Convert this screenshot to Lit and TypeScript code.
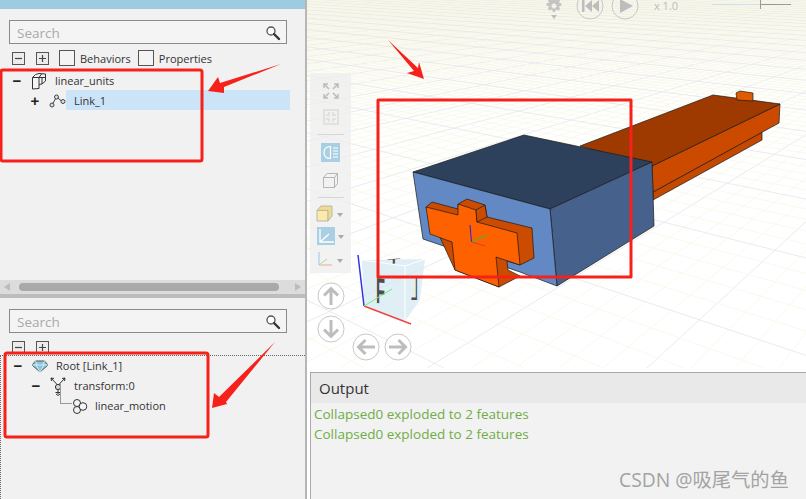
import { LitElement, html, svg, css } from 'lit';
import { customElement } from 'lit/decorators.js';

const searchIcon = html`<svg class="glass" width="16" height="16" viewBox="0 0 16 16">
  <circle cx="6" cy="6" r="4" fill="#fff" stroke="#555" stroke-width="1.3"/>
  <path d="M9 9l5 5" stroke="#333" stroke-width="2.4" stroke-linecap="round"/></svg>`;

const icons: Record<string, unknown> = {
  part: html`<svg width="16" height="18" viewBox="0 0 16 18" fill="#f4f4f4" stroke="#333" stroke-width="1">
    <path d="M1.500 5.500L4.500 2.500L8 1.500L14.500 2L14.500 9L11 12L8 12.500L8 16.500L1.500 17Z"/>
    <path d="M1.500 5.500L8 5.500L8 12.500M8 5.500L10.500 2M11 5.500L11 12M8 5.500L14.500 5.500" fill="none"/></svg>`,
  link: html`<svg width="17" height="14" viewBox="0 0 17 14" fill="#cfe3ee" stroke="#444" stroke-width="1">
    <path d="M3 11L7.500 3L12.500 7" fill="none"/>
    <circle cx="3" cy="11" r="2"/><circle cx="7.500" cy="3" r="2"/><circle cx="14" cy="7.500" r="2"/></svg>`,
  gem: html`<svg width="18" height="13" viewBox="0 0 18 13" fill="#8fc3dc" stroke="#555" stroke-width="1">
    <path d="M4.500 1L13.500 1L17 5L9 12L1 5Z"/>
    <path d="M1 5L17 5M5 5L9 12L13 5M4.500 1L6 5M13.500 1L12 5" fill="none" stroke="#dff" stroke-width=".7"/></svg>`,
  transform: html`<svg width="16" height="19" viewBox="0 0 16 19" fill="none" stroke="#333" stroke-width="1">
    <path d="M1 1L8 8.500L15 1M8 8.500L8 17M5.500 15.500L10.500 15.500"/>
    <path d="M1 1L4 1.500M1 1L1.500 4M15 1L12 1.500M15 1L14.500 4M6 17L8 18.500L10 17"/>
    <circle cx="8" cy="10" r="2.600" fill="#d8d8d8"/></svg>`,
  motion: html`<svg width="16" height="15" viewBox="0 0 16 15" fill="#f4f4f4" stroke="#333" stroke-width="1">
    <circle cx="5" cy="4" r="3.500"/><circle cx="5" cy="11" r="3.500"/><circle cx="11" cy="7.500" r="3.800"/></svg>`,
};

type Row = { depth: number; toggle?: '-' | '+'; icon: string; label: string; selected?: boolean; branch?: boolean };

const upperTree: Row[] = [
  { depth: 0, toggle: '-', icon: 'part', label: 'linear_units' },
  { depth: 1, toggle: '+', icon: 'link', label: 'Link_1', selected: true },
];
const lowerTree: Row[] = [
  { depth: 0, toggle: '-', icon: 'gem', label: 'Root [Link_1]' },
  { depth: 1, toggle: '-', icon: 'transform', label: 'transform:0' },
  { depth: 2, icon: 'motion', label: 'linear_motion', branch: true },
];

const VIEW_X = 307;
const HORIZON = -40;
const BASE_Y = 368;

// ground grid: parallel ground lines cut a screen row at equal steps
function family(vpX: number, from: number, to: number, step: number, major: number) {
  const out: unknown[] = [];
  for (let x = from; x < to; x += step) {
    const isMajor = ((x - major) % (step * 5) + step * 5) % (step * 5) === 0;
    out.push(svg`<line class=${isMajor ? 'major' : 'minor'}
      x1=${vpX - VIEW_X} y1=${HORIZON} x2=${x - VIEW_X} y2=${BASE_Y} />`);
  }
  return out;
}

const scene = svg`
  <g class="grid">
    ${family(1090, 647 - 44 * 175, 1300, 44, 647)}
    ${family(-380, 844 - 80 * 8, 12000, 80, 844)}
  </g>
  <g transform="translate(${-VIEW_X} 0)" stroke="#1a1a1a" stroke-width=".7" stroke-linejoin="round">
    <path d="M653 192L762 132L762 140L653 200Z" fill="#c44800"/>
    <path d="M652 166L780 104L779 123L653 192Z" fill="#cc4a00"/>
    <path d="M580 146L713 95L780 104L652 166Z" fill="#9e3a00"/>
    <path d="M736 93L740 91L753 93L753 101L737 100Z" fill="#e05a00"/>
    <path d="M413 172L524 135L652 162L550 209Z" fill="#2d415d"/>
    <path d="M550 209L652 162L654 226L557 286Z" fill="#46628c"/>
    <path d="M413 172L550 209L557 286L520 272L423 239Z" fill="#6389c4"/>
    <path d="M426 207L432 202L458 209L458 204L467 199L485 205L487 217L532 228L534 258L520 265L507 261L508 270L520 276L499 287L455 270Z" fill="#cb4b00"/>
    <path d="M426 207L458 215L458 204L476 210L477 222L517 233L520 265L496 257L499 287L455 270L452 242L430 234Z" fill="#fe6200"/>
    <path d="M476 210L485 205L487 217L477 222Z" fill="#cb4b00"/>
  </g>
  <g transform="translate(${-VIEW_X} 0)" fill="none" stroke-width="1">
    <path d="M470 225L471.500 242" stroke="#2222ee"/>
    <path d="M471.500 242L487 235" stroke="#22cc22"/>
    <path d="M471.500 242L485 246" stroke="#ee3333"/>
  </g>
`;

const cube = svg`
  <g transform="translate(${-VIEW_X} 0)">
    <path d="M362 260L425 259L420 300L405 321L364 306Z" fill="#cfe6f0" fill-opacity=".65"/>
    <path d="M362 260L405 266L425 259M405 266L405 321" fill="none" stroke="#fff" stroke-width="1"/>
    <text class="face" transform="matrix(1 .12 0 1 376 303) scale(1.050 2.600)">F</text>
    <text class="face thin" transform="matrix(-1 0 0 1 418 300) scale(.9 2.400)">L</text>
    <text class="face thin" transform="matrix(1 -.05 0 1 387 264) scale(1.600 .5)">T</text>
    <line x1="364" y1="306" x2="358" y2="255" stroke="#3333ee" stroke-width="1.500"/>
    <line x1="364" y1="306" x2="411" y2="324" stroke="#ee4444" stroke-width="1.500"/>
    <line x1="364" y1="306" x2="392" y2="289" stroke="#77ee77" stroke-width="1"/>
  </g>
`;

function roundBtn(kind: 'up' | 'down' | 'left' | 'right') {
  const rot = { up: 0, down: 180, left: 270, right: 90 }[kind];
  return html`<svg class="nav" width="28" height="28" viewBox="0 0 28 28">
    <circle cx="14" cy="14" r="13" fill="#fff" fill-opacity=".6" stroke="#c8c8c8" stroke-width="1"/>
    <g transform="rotate(${rot} 14 14)" fill="none" stroke="#bdbdbd" stroke-width="3">
      <path d="M14 23V7M7 13.500L14 6.500L21 13.500"/></g></svg>`;
}

@customElement('app-root')
export class AppRoot extends LitElement {
  static styles = css`
    :host { display: block; width: 806px; height: 499px; overflow: hidden; background: #fff;
      font-family: "Open Sans", "Noto Sans CJK SC", sans-serif; color: #333; }
    .page { display: flex; height: 499px; position: relative; }
    .left { width: 305px; flex: none; display: flex; flex-direction: column; background: #f1f1f1;
      border-right: 2px solid #b6b6b6; border-left: 1px solid #c8c8c8; box-sizing: content-box; margin-left: -1px; }
    .title { height: 9px; flex: none; background: #9ccbe2; }
    .upper { flex: 1; min-height: 0; display: flex; flex-direction: column; }
    .lower { height: 201px; flex: none; border-top: 4px solid #bdbdbd; display: flex; flex-direction: column; }
    .search { margin: 11px 0 0 9px; width: 278px; height: 24px; flex: none; box-sizing: border-box; border: 1px solid #8a8a8a;
      background: #f4f4f4; display: flex; align-items: center; justify-content: space-between;
      padding: 1px 5px 0 7px; font-size: 13.500px; color: #a9a9a9; }
    .glass { display: block; }
    .tools { display: flex; align-items: center; height: 16px; margin-top: 6px; padding-left: 12px; font-size: 11px; flex: none; }
    .lower .tools { margin-top: 8px; height: 13px; }
    .btn { width: 13px; height: 13px; box-sizing: border-box; border: 1px solid #555; background: #ececec; margin-right: 11px;
      display: flex; align-items: center; justify-content: center; }
    .btn + .btn { margin-right: 10px; }
    .btn svg { display: block; }
    .check { width: 16px; height: 16px; box-sizing: border-box; border: 1px solid #555; background: #f4f4f4; margin-right: 5px; }
    .check + span { margin-right: 7px; }
    .tree { margin-top: 5px; font-size: 11px; }
    .lower .tree { flex: 1; margin-top: 1px; border: 1px dotted #666; border-right: none; border-bottom: none; }
    .row { height: 20px; display: flex; align-items: center; position: relative; }
    .depth0 { padding-left: 12px; }
    .depth1 { padding-left: 30px; }
    .depth2 { padding-left: 71px; }
    .toggle { width: 10px; font: 700 15px/20px "Liberation Sans", sans-serif; text-align: center; flex: none; color: #222; }
    .icon { width: 18px; margin-left: 8px; display: flex; justify-content: center; flex: none; }
    .depth2 .icon { margin-left: 0; width: 16px; }
    .label { margin-left: 6px; padding: 0 0 0 1px; line-height: 20px; white-space: nowrap; }
    .selected { position: relative; top: -1px; flex: none; margin-left: 0; width: 224px; height: 20px; box-sizing: border-box;
      padding-left: 8px; line-height: 22px; background: #cce4f7; }
    .branch { position: absolute; left: 59px; top: -12px; width: 12px; height: 20px; box-sizing: border-box;
      border-left: 1px solid #999; border-bottom: 1px solid #999; }
    .scrollbar { height: 14px; flex: none; background: #dcdcdc; display: flex; align-items: center; margin-top: auto; padding: 0 4px; }
    .thumb { flex: 1; height: 8px; margin: 0 16px 0 9px; border-radius: 4px; background: #a9a9a9; }
    .arrow { width: 0; height: 0; border: 4px solid transparent; }
    .arrow.l { border-left: none; border-right: 6px solid #bcbcbc; }
    .arrow.r { border-right: none; border-left: 6px solid #bcbcbc; }
    .right { flex: 1; min-width: 0; display: flex; flex-direction: column; }
    .view { height: 368px; flex: none; position: relative; overflow: hidden; background: #fff; }
    .scene { position: absolute; left: 0; top: 0; }
    .grid line { stroke-width: .8; }
    .grid .minor { stroke: #f8f8ea; }
    .grid .major { stroke: #e6e6e6; }
    .face { font: 700 14px "Liberation Sans", sans-serif; fill: #4d4d4d; }
    .face.thin { font-weight: 400; }
    .rail { position: absolute; left: 3px; top: 73px; width: 41px; height: 200px; padding-top: 5px; box-sizing: border-box;
      background: rgba(238,238,238,.75); display: flex; flex-direction: column; align-items: center; }
    .rail svg { display: block; }
    .rail hr { width: 26px; border: none; border-top: 1px solid #d6d6d6; margin: 4px 0; flex: none; }
    .rail .tool { height: 26px; flex: none; display: flex; align-items: center; justify-content: center; width: 100%; }
    .rail .tool.box { margin-top: 2px; }
    .rail .tool.sm { height: 23px; }
    .nav { position: absolute; }
    .n-up { left: 10px; top: 282px; }
    .n-down { left: 10px; top: 315px; }
    .n-left { left: 45px; top: 333px; }
    .n-right { left: 77px; top: 333px; }
    .play { position: absolute; top: -7px; left: 229px; display: flex; align-items: center; }
    .speed { position: absolute; left: 347px; top: 1px; font-size: 11px; line-height: 10px; color: #bcbcbc; }
    .slider { position: absolute; left: 405px; top: 4px; width: 79px; height: 1px; background: linear-gradient(to right, #cfe2ec 0 48px, #999 48px); }
    .slider::after { content: ""; position: absolute; left: 48px; top: -4px; width: 1px; height: 9px; background: #999; }
    .output { flex: 1; margin: 4px 0 0 3px; border: 1px solid #a9a9a9; border-width: 1px 0 0 1px; background: #f2f2f2; }
    .output h3 { margin: 0 0 1px; height: 30px; line-height: 30px; padding-left: 8px; font-size: 15px; font-weight: 400; color: #333; background: #e9e9e9; }
    .output p { margin: 0; padding-left: 3px; height: 20px; line-height: 20px; font-size: 13.500px; color: #70ad47; white-space: nowrap; }
    .mark { position: absolute; left: 619px; top: 465px; font-size: 19.300px; color: #a3a3a3; white-space: nowrap; }
    .marks { position: absolute; left: 0; top: 0; pointer-events: none; }
  `;

  private tree(rows: Row[]) {
    return html`<div class="tree">
      ${rows.map(r => html`<div class="row depth${r.depth}">
        ${r.branch ? html`<span class="branch"></span>` : ''}
        ${r.toggle ? html`<span class="toggle">${r.toggle === '-' ? '−' : '+'}</span>` : ''}
        <span class="icon">${icons[r.icon]}</span>
        <span class="label ${r.selected ? 'selected' : ''}">${r.label}</span>
      </div>`)}
    </div>`;
  }

  private treeTools(withChecks: boolean) {
    return html`<div class="tools">
      <span class="btn"><svg width="9" height="9"><path d="M1 4.500H8" stroke="#444" stroke-width="1.200"/></svg></span>
      <span class="btn"><svg width="9" height="9"><path d="M1 4.500H8M4.500 1V8" stroke="#444" stroke-width="1.200"/></svg></span>
      ${withChecks ? html`<span class="check"></span><span>Behaviors</span><span class="check"></span><span>Properties</span>` : ''}
    </div>`;
  }

  render() {
    return html`<div class="page">
      <aside class="left">
        <div class="title"></div>
        <section class="upper">
          <div class="search">Search ${searchIcon}</div>
          ${this.treeTools(true)}
          ${this.tree(upperTree)}
          <div class="scrollbar"><span class="arrow l"></span><span class="thumb"></span><span class="arrow r"></span></div>
        </section>
        <section class="lower">
          <div class="search">Search ${searchIcon}</div>
          ${this.treeTools(false)}
          ${this.tree(lowerTree)}
        </section>
      </aside>
      <main class="right">
        <div class="view">
          <svg class="scene" width="500" height="368">${scene}</svg>
          <div class="play">
            <svg width="130" height="32" viewBox="0 0 130 32">
              <path fill-rule="evenodd" d="M17 4l2 0l1 2.500l2.500 -1l1.500 1.500l-1 2.500l2.500 1v2l-2.500 1l1 2.500l-1.500 1.500l-2.500 -1l-1 2.500h-2l-1 -2.500l-2.500 1l-1.500 -1.500l1 -2.500l-2.500 -1v-2l2.500 -1l-1 -2.500l1.500 -1.500l2.500 1zM18 10.500a2.500 2.500 0 1 0 .01 0z" fill="#c4c4c4"/>
              <path d="M15 22h6l-3 4z" fill="#bdbdbd"/>
              <circle cx="54" cy="13" r="13" fill="none" stroke="#c8c8c8"/>
              <path d="M46 7h2.500v12H46zM56 7v12l-7 -6zM63 7v12l-7 -6z" fill="#bdbdbd"/>
              <circle cx="89" cy="13" r="13" fill="none" stroke="#c8c8c8"/>
              <path d="M84 6l13 7l-13 7z" fill="#bdbdbd"/>
            </svg>
          </div>
          <span class="speed">x 1.0</span>
          <div class="slider"></div>
          <div class="rail">
            <div class="tool"><svg width="16" height="16" viewBox="0 0 16 16" fill="none" stroke="#bcbcbc" stroke-width="1.500"><path d="M1 5V1H5M1 1L6 6M11 1H15V5M15 1L10 6M1 11V15H5M1 15L6 10M15 11V15H11M15 15L10 10"/></svg></div>
            <div class="tool"><svg width="16" height="16" viewBox="0 0 16 16" fill="none" stroke="#dcdcdc" stroke-width="1.500"><path d="M1 1H15V15H1ZM6 3V6H3M10 3V6H13M6 13V10H3M10 13V10H13"/></svg></div>
            <hr />
            <div class="tool"><svg width="19" height="19" viewBox="0 0 19 19"><rect width="19" height="19" fill="#a9d0e2"/><path d="M9.500 3.500C5 3.500 3 6 3 9.500S5 15.500 9.500 15.500ZM12 5H17M12 8H17M12 11H17M12 14H17" fill="none" stroke="#fff" stroke-width="1.200"/></svg></div>
            <div class="tool box"><svg width="17" height="17" viewBox="0 0 17 17" fill="none" stroke="#b5b5b5"><path d="M1.500 5.500H12.500V15.500H1.500ZM1.500 5.500L5 1.500H15.500V11.500L12.500 15.500M12.500 5.500L15.500 1.500"/></svg></div>
            <hr />
            <div class="tool sm"><svg width="30" height="17" viewBox="0 0 30 17"><path d="M1 5.500H12V16H1Z" fill="#fbeaa8" stroke="#b8b8b0"/><path d="M1 5.500L5 1H16V11L12 16V5.500Z" fill="#f3d98c" stroke="#b8b8b0"/><path d="M21 8h6l-3 4z" fill="#aaa"/></svg></div>
            <div class="tool sm"><svg width="30" height="19" viewBox="0 0 30 19"><rect x="1" width="18" height="18" fill="#a9d0e2"/><path d="M4 2V15H18M4 15L13 7" fill="none" stroke="#fff" stroke-width="1.300"/><path d="M22 8h6l-3 4z" fill="#aaa"/></svg></div>
            <div class="tool sm"><svg width="30" height="17" viewBox="0 0 30 17" fill="none"><path d="M3 1V14" stroke="#9fc4e8"/><path d="M3 14H16" stroke="#f2a99c"/><path d="M3 14L11 8" stroke="#a8dca8"/><path d="M21 8h6l-3 4z" fill="#aaa"/></svg></div>
          </div>
          <svg class="scene" width="500" height="368">${cube}</svg>
          <span class="nav n-up">${roundBtn('up')}</span>
          <span class="nav n-down">${roundBtn('down')}</span>
          <span class="nav n-left">${roundBtn('left')}</span>
          <span class="nav n-right">${roundBtn('right')}</span>
        </div>
        <div class="output">
          <h3>Output</h3>
          <p>Collapsed0 exploded to 2 features</p>
          <p>Collapsed0 exploded to 2 features</p>
        </div>
      </main>
      <svg class="marks" width="806" height="499">
        <g fill="none" stroke="#f5211a" stroke-width="3" stroke-linejoin="round">
          <rect x="1" y="70" width="201" height="91" rx="2"/>
          <rect x="5" y="353" width="203" height="84" rx="2"/>
          <rect x="378" y="100" width="253" height="177"/>
        </g>
        <g fill="#f5211a">
          <path d="M208 91L218 77L220 83L281 64L224 87L224 93Z"/>
          <path d="M212 408L214 393L219 397L275 342L226 402L227 404Z"/>
          <path d="M388 40L418 68L419 62L424 79L407 73L414 71Z"/>
        </g>
      </svg>
      <span class="mark">CSDN @吸尾气的鱼</span>
    </div>`;
  }
}
